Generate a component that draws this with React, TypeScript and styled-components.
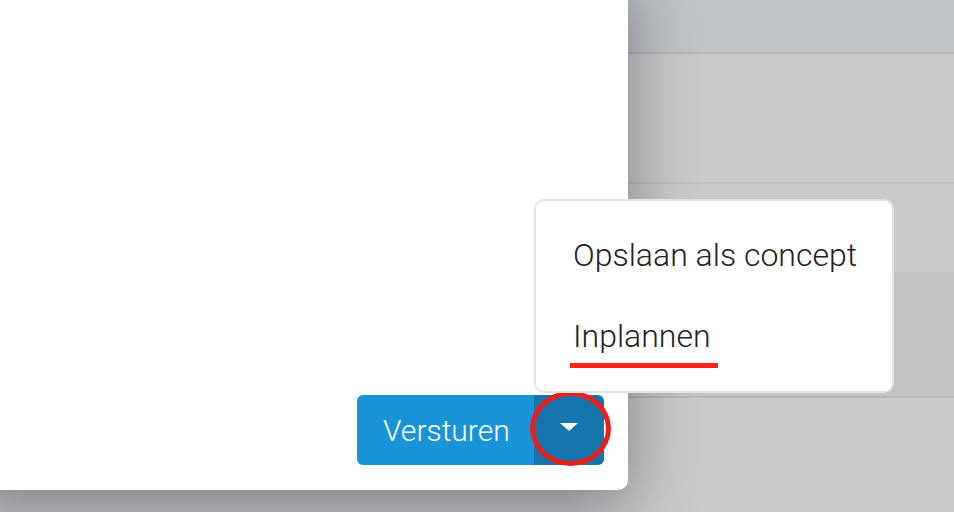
import React from "react";
import styled, { createGlobalStyle } from "styled-components";

const GlobalStyle = createGlobalStyle`
  html, body {
    margin: 0;
    padding: 0;
    background: #cbcbcb;
  }
  body {
    font-family: Roboto, "Liberation Sans", Arial, sans-serif;
  }
`;

const Page = styled.div`
  position: relative;
  width: 954px;
  height: 512px;
  overflow: hidden;
  background: #cbcbcb;
`;

/* dimmed table lying under the modal */
const Table = styled.div`
  display: flex;
  flex-direction: column;
`;

const HeaderRow = styled.div`
  height: 52px;
  background: linear-gradient(90deg, #b9bdc2 0%, #c1c5c9 40%, #c1c5c9 100%);
  border-bottom: 2px solid #b2b5b9;
`;

const Row = styled.div<{ $height: number; $tone?: string; $line?: string }>`
  height: ${(p) => p.$height}px;
  background: ${(p) => p.$tone || "#cbcbcb"};
  border-bottom: ${(p) => (p.$line ? `2px solid ${p.$line}` : "none")};
`;

const Modal = styled.div`
  position: absolute;
  left: -40px;
  top: -40px;
  right: 326px;
  bottom: 22px;
  background: #fff;
  border-radius: 10px;
  box-shadow: 0 20px 70px rgba(20, 15, 35, 0.42);
  display: flex;
  flex-direction: column;
  justify-content: flex-end;
  align-items: flex-end;
  padding: 0 24px 25px 0;
`;

const SplitButton = styled.div`
  display: flex;
  height: 70px;
  border-radius: 6px;
`;

const MainButton = styled.button`
  height: 70px;
  width: 177px;
  border: none;
  border-radius: 6px 0 0 6px;
  background: #1a94d9;
  color: #fff;
  font-family: Roboto, "Liberation Sans", Arial, sans-serif;
  font-weight: 300;
  font-size: 30px;
  padding: 0 25px 0 26px;
  cursor: pointer;
`;

const ToggleWrap = styled.div`
  position: relative;
`;

const ToggleButton = styled.button`
  height: 70px;
  width: 70px;
  border: none;
  border-radius: 0 6px 6px 0;
  background: #1675ad;
  display: flex;
  align-items: center;
  justify-content: center;
  padding: 0 0 6px 0;
  cursor: pointer;
`;

const Caret = styled.span`
  width: 0;
  height: 0;
  border-left: 9px solid transparent;
  border-right: 9px solid transparent;
  border-top: 8px solid #fff;
`;

/* red annotation circle drawn over the toggle */
const Ring = styled.span`
  position: absolute;
  left: -4px;
  top: -4px;
  width: 81px;
  height: 75px;
  box-sizing: border-box;
  border: 5px solid #ea1f1b;
  border-radius: 50%;
  pointer-events: none;
`;

const Menu = styled.ul`
  position: absolute;
  left: 0;
  bottom: calc(100% + 2px);
  width: 360px;
  height: 194px;
  box-sizing: border-box;
  margin: 0;
  padding: 14px 0 0;
  list-style: none;
  background: #fff;
  border: 2px solid #e4e4e4;
  border-radius: 10px;
`;

const MenuItem = styled.li`
  height: 81px;
  line-height: 81px;
  padding: 0 37px;
  font-size: 32px;
  font-weight: 300;
  color: #222326;
  white-space: nowrap;
`;

/* red annotation underline */
const Marked = styled.span`
  position: relative;
  display: inline-block;
  line-height: 34px;

  &::after {
    content: "";
    position: absolute;
    left: -3px;
    right: -7px;
    top: 44px;
    height: 5px;
    background: #fd2219;
  }
`;

export default function App() {
  return (
    <Page>
      <GlobalStyle />
      <Table>
        <HeaderRow />
        <Row $height={128} $line="#c0c0c1" />
        <Row $height={88} />
        <Row $height={124} $tone="#c4c4c4" $line="#b4b7bb" />
        <Row $height={116} />
      </Table>
      <Modal>
        <SplitButton>
          <MainButton>Versturen</MainButton>
          <ToggleWrap>
            <ToggleButton aria-label="Meer opties">
              <Caret />
            </ToggleButton>
            <Ring />
            <Menu>
              <MenuItem>Opslaan als concept</MenuItem>
              <MenuItem>
                <Marked>Inplannen</Marked>
              </MenuItem>
            </Menu>
          </ToggleWrap>
        </SplitButton>
      </Modal>
    </Page>
  );
}
